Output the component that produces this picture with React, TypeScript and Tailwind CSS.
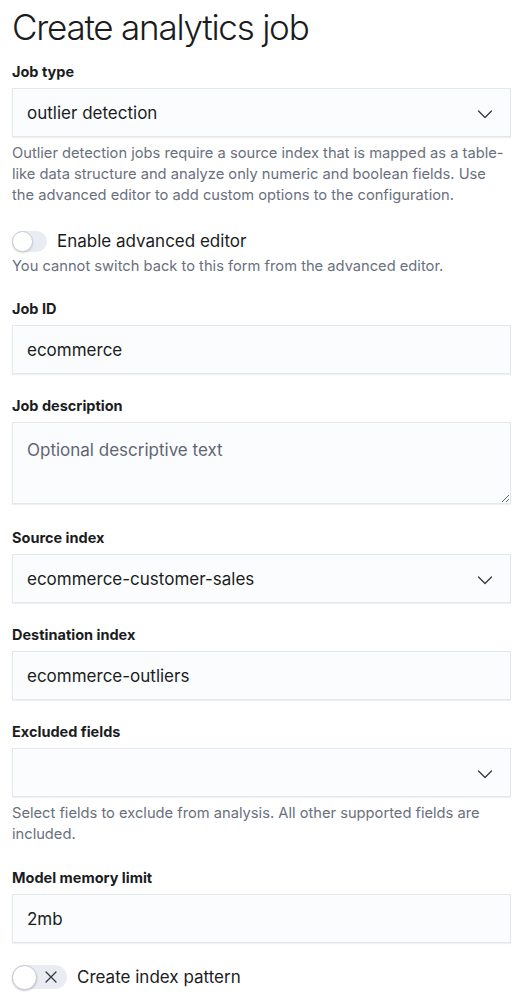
import React from 'react';

const font = { fontFamily: 'Inter, "Noto Sans", sans-serif' };

function Chevron() {
  return (
    <svg width="16" height="16" viewBox="0 0 16 16" fill="none" className="shrink-0">
      <path d="M1.5 5l6.5 6.5L14.5 5" stroke="#343741" strokeWidth="1.3" strokeLinecap="round" strokeLinejoin="round" />
    </svg>
  );
}

function Label({ children }: { children: React.ReactNode }) {
  return <div className="text-[14.5px] leading-[18px] font-bold text-[#1a1c21]">{children}</div>;
}

function Help({ children }: { children: React.ReactNode }) {
  return <div className="mt-[6px] text-[14.7px] leading-[21px] text-[#69707d]">{children}</div>;
}

function Field({ value, select }: { value?: string; select?: boolean }) {
  return (
    <div className="mt-[7px] h-[49px] flex items-center justify-between pl-[14px] pr-[17px] pt-[2px] bg-[#fbfcfd] border border-[#e4e7ee] shadow-[0_1px_1px_rgba(0,0,0,0.06)] text-[17px] text-[#1a1c21]">
      <span>{value}</span>
      {select && <Chevron />}
    </div>
  );
}

function Row({ label, children, first, gap }: { label: string; children: React.ReactNode; first?: boolean; gap?: string }) {
  return (
    <div className={first ? 'mt-[15px]' : gap ?? 'mt-[23px]'}>
      <Label>{label}</Label>
      {children}
    </div>
  );
}

export default function App() {
  return (
    <div className="w-[523px] min-h-[1002px] bg-white px-[12px] pt-[6px]" style={font}>
      <h1 className="text-[35px] leading-[42px] font-light tracking-[-0.035em] text-[#1a1c21]">Create analytics job</h1>

      <Row label="Job type" first>
        <Field value="outlier detection" select />
        <Help>
          Outlier detection jobs require a source index that is mapped as a table-like data structure and analyze only
          numeric and boolean fields. Use the advanced editor to add custom options to the configuration.
        </Help>
      </Row>

      <div className="mt-[23px] flex items-center h-[24px]">
        <div className="relative w-[35px] h-[21px] rounded-full bg-[#e9edf3]">
          <div className="absolute left-0 top-0 w-[21px] h-[21px] rounded-full bg-white border border-[#c5ccd6] shadow-[0_1px_2px_rgba(0,0,0,0.15)]" />
        </div>
        <span className="ml-[10px] text-[17px] leading-[24px] text-[#1a1c21]">Enable advanced editor</span>
      </div>
      <div className="mt-[3px] text-[14.7px] leading-[21px] text-[#69707d]">
        You cannot switch back to this form from the advanced editor.
      </div>

      <Row label="Job ID">
        <Field value="ecommerce" />
      </Row>

      <Row label="Job description">
        <textarea
          readOnly
          placeholder="Optional descriptive text"
          className="mt-[7px] block w-full h-[82px] resize-y pl-[14px] pr-[15px] pt-[15px] bg-[#fbfcfd] border border-[#e4e7ee] shadow-[0_1px_1px_rgba(0,0,0,0.06)] text-[17px] leading-[24px] text-[#1a1c21] placeholder:text-[#5f6672] outline-none"
        />
      </Row>

      <Row label="Source index" gap="mt-[25px]">
        <Field value="ecommerce-customer-sales" select />
      </Row>

      <Row label="Destination index">
        <Field value="ecommerce-outliers" />
      </Row>

      <Row label="Excluded fields">
        <Field select />
        <Help>Select fields to exclude from analysis. All other supported fields are included.</Help>
      </Row>

      <Row label="Model memory limit" gap="mt-[24px]">
        <Field value="2mb" />
      </Row>

      <div className="mt-[21px] flex items-center h-[25px]">
        <div className="relative w-[55px] h-[24px] rounded-full bg-[#e9edf3]">
          <div className="absolute left-0 top-[0px] w-[25px] h-[25px] rounded-full bg-white border border-[#c5ccd6] shadow-[0_1px_2px_rgba(0,0,0,0.2)]" />
          <svg width="12" height="12" viewBox="0 0 12 12" className="absolute left-[33px] top-[6px]">
            <path d="M1 1l10 10M11 1L1 11" stroke="#343741" strokeWidth="1.3" strokeLinecap="round" />
          </svg>
        </div>
        <span className="ml-[10px] text-[17px] leading-[24px] text-[#1a1c21]">Create index pattern</span>
      </div>
    </div>
  );
}
